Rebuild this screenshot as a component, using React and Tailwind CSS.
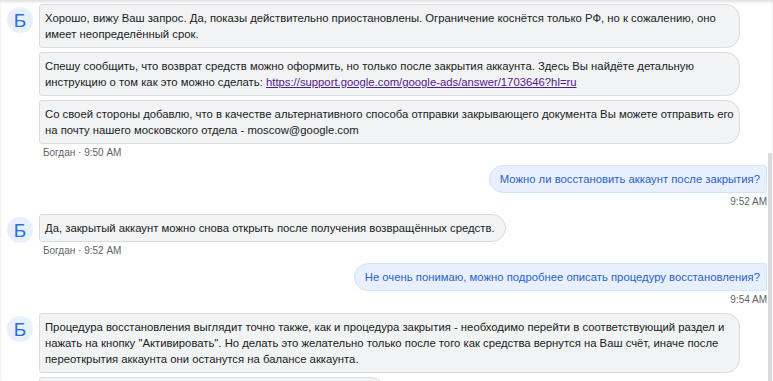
import React from "react";

const incoming = "bg-[#f1f3f4] border border-[#dadce0] rounded-l-[3px] rounded-r-[14px] pl-[5px] pr-[10px] py-[5px] text-[#202124]";
const outgoing = "bg-[#e8f0fe] border border-[#d2e3fc] rounded-l-[14px] rounded-r-[3px] pl-[10px] pr-[6px] py-[5px] text-[#2a62c6] w-fit self-end";

const Avatar = () => (
  <div className="w-[26px] h-[26px] mt-[3px] shrink-0 rounded-full bg-[#e8f0fe] flex items-center justify-center text-[#2a6fd6] text-[19px] leading-none">
    Б
  </div>
);

const Incoming = ({ messages, time, className = "" }) => (
  <div className={`flex gap-[6px] ${className}`}>
    <Avatar />
    <div className="flex flex-col gap-[4px]">
      {messages.map((m, i) => (
        <div key={i} className={`${incoming} ${m.wide ? "w-[701px] whitespace-nowrap" : "w-fit"}`}>
          {m.body}
        </div>
      ))}
      {time && (
        <div className="-mt-[2px] pl-[4px] text-[10px] leading-[14px] text-[#5f6368]">
          Богдан · {time}
        </div>
      )}
    </div>
  </div>
);

const Outgoing = ({ text, time, className = "" }) => (
  <div className={`flex flex-col items-end ${className}`}>
    <div className={outgoing}>{text}</div>
    <div className="mt-[2px] text-[10px] leading-[14px] text-[#5f6368]">{time}</div>
  </div>
);

export default function App() {
  return (
    <div className="relative w-[773px] h-[381px] overflow-hidden bg-white font-['Liberation_Sans',Arial,sans-serif] text-[11.3px] leading-[16px] shadow-[inset_0_2px_3px_rgba(0,0,0,0.12)]">
      <div className="flex flex-col pl-[7px] pr-[6px] pt-[4px]">
        <Incoming
          time="9:50 AM"
          messages={[
            {
              wide: true,
              body: (
                <>
                  Хорошо, вижу Ваш запрос. Да, показы действительно приостановлены. Ограничение коснётся только РФ, но к сожалению, оно
                  <br />
                  имеет неопределённый срок.
                </>
              ),
            },
            {
              wide: true,
              body: (
                <>
                  Спешу сообщить, что возврат средств можно оформить, но только после закрытия аккаунта. Здесь Вы найдёте детальную
                  <br />
                  инструкцию о том как это можно сделать:{" "}
                  <a href="#" className="text-[#551a8b] underline">
                    https://support.google.com/google-ads/answer/1703646?hl=ru
                  </a>
                </>
              ),
            },
            {
              wide: true,
              body: (
                <>
                  Со своей стороны добавлю, что в качестве альтернативного способа отправки закрывающего документа Вы можете отправить его
                  <br />
                  на почту нашего московского отдела - moscow@google.com
                </>
              ),
            },
          ]}
        />
        <Outgoing
          className="mt-[5px]"
          text="Можно ли восстановить аккаунт после закрытия?"
          time="9:52 AM"
        />
        <Incoming
          className="mt-[5px]"
          time="9:52 AM"
          messages={[{ body: "Да, закрытый аккаунт можно снова открыть после получения возвращённых средств." }]}
        />
        <Outgoing
          className="mt-[5px]"
          text="Не очень понимаю, можно подробнее описать процедуру восстановления?"
          time="9:54 AM"
        />
        <div className="flex gap-[6px] mt-[6px]">
          <Avatar />
          <div className="flex flex-col gap-[4px]">
            <div className={`${incoming} w-[701px] whitespace-nowrap`}>
              Процедура восстановления выглядит точно также, как и процедура закрытия - необходимо перейти в соответствующий раздел и
              <br />
              нажать на кнопку "Активировать". Но делать это желательно только после того как средства вернутся на Ваш счёт, иначе после
              <br />
              переоткрытия аккаунта они останутся на балансе аккаунта.
            </div>
            <div className={`${incoming} w-[346px] h-[28px]`} />
          </div>
        </div>
      </div>
      <div className="absolute right-[1px] top-[153px] bottom-0 w-[4px] bg-[#dadce0]" />
    </div>
  );
}
